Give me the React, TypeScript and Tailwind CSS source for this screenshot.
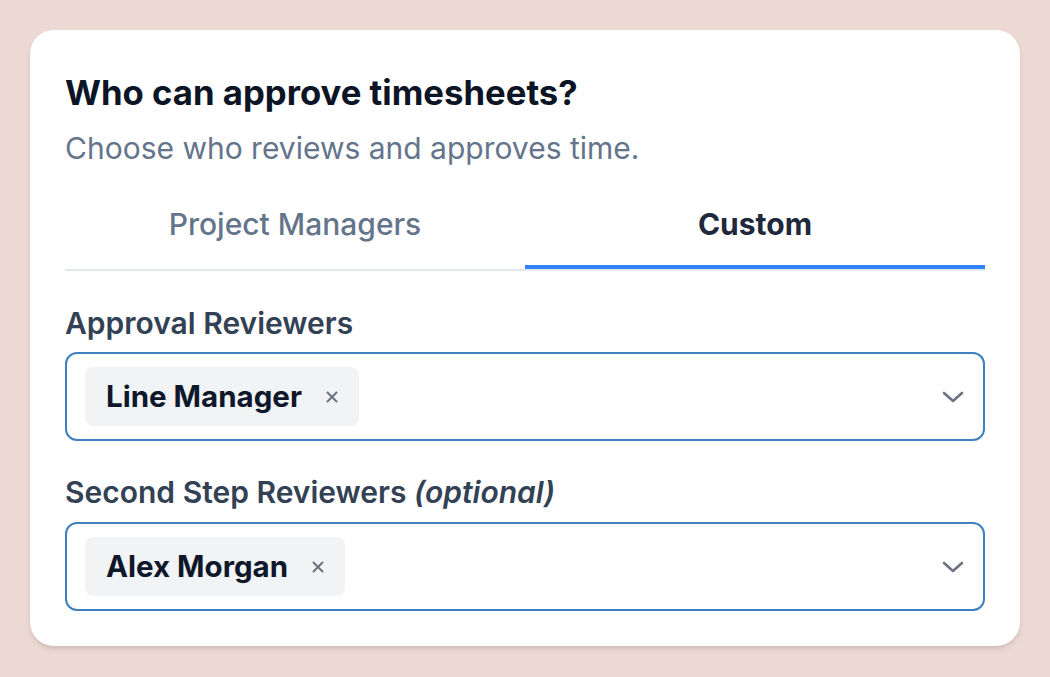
import React, { useState } from 'react';

const Chevron: React.FC = () => (
  <svg width="22" height="12" viewBox="0 0 22 12" fill="none" stroke="#6b7280" strokeWidth="2.6" strokeLinecap="round" strokeLinejoin="round">
    <path d="M2 2l9 8 9-8" />
  </svg>
);

const CloseX: React.FC = () => (
  <svg width="12" height="12" viewBox="0 0 12 12" fill="none" stroke="#6b7280" strokeWidth="2" strokeLinecap="round">
    <path d="M1.5 1.5l9 9M10.5 1.5l-9 9" />
  </svg>
);

const Chip: React.FC<{ label: string }> = ({ label }) => (
  <span className="flex items-center gap-[24px] bg-[#f1f3f5] rounded-lg h-[59px] pl-[21px] pr-[21px]">
    <span className="text-[29.5px] font-bold text-[#0f172a] leading-none">{label}</span>
    <CloseX />
  </span>
);

const SelectBox: React.FC<{ label: string }> = ({ label }) => (
  <div className="flex items-center justify-between border-2 border-[#3f80bf] rounded-xl h-[89px] pl-[18px] pr-[19px]">
    <Chip label={label} />
    <Chevron />
  </div>
);

const App: React.FC = () => {
  const [tab, setTab] = useState('custom');

  const tabClass = (id: string) =>
    `flex-1 h-[85px] text-[30px] border-b-4 ${
      tab === id ? 'font-bold text-[#1e293b] border-[#3182f6]' : 'font-medium text-[#64748b] border-transparent'
    }`;

  return (
    <div className="min-h-screen bg-[#ecd9d3] p-[30px]" style={{ fontFamily: 'Inter, "Liberation Sans", sans-serif' }}>
      <div className="bg-white rounded-3xl shadow-md px-[35px] pt-[42px] h-[616px]">
        <h1 className="text-[34.7px] font-bold text-[#0b1526] leading-[40px]">Who can approve timesheets?</h1>
        <p className="text-[30px] text-[#64748b] mt-[18px] leading-[36px]">Choose who reviews and approves time.</p>

        <div className="flex mt-[18px] border-b-2 border-[#e2e8f0]">
          <button onClick={() => setTab('pm')} className={tabClass('pm')}>
            Project Managers
          </button>
          <button onClick={() => setTab('custom')} className={tabClass('custom')}>
            Custom
          </button>
        </div>

        <div className="mt-[34px]">
          <label className="block text-[30px] font-semibold text-[#334155] leading-[36px]">Approval Reviewers</label>
          <div className="mt-[11px]">
            <SelectBox label="Line Manager" />
          </div>
        </div>

        <div className="mt-[33px]">
          <label className="block text-[30px] font-semibold text-[#334155] leading-[36px]">
            Second Step Reviewers <em className="italic">(optional)</em>
          </label>
          <div className="mt-[12px]">
            <SelectBox label="Alex Morgan" />
          </div>
        </div>
      </div>
    </div>
  );
};

export default App;
